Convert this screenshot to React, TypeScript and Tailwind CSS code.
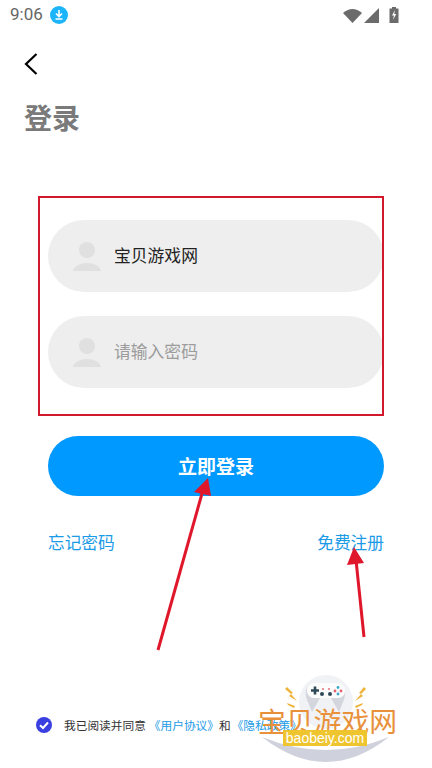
import React from "react";

const cjk = "font-['Noto_Sans_CJK_SC','Noto_Sans',sans-serif]";

function UserIcon() {
  return (
    <svg width="28" height="29" viewBox="0 0 28 29" className="shrink-0">
      <circle cx="14" cy="8" r="8" fill="#e0e0e0" />
      <path d="M0 29 C1 24 7 21 14 21 C21 21 27 24 28 29 Z" fill="#e0e0e0" />
    </svg>
  );
}

function Field({ text, dim }: { text: string; dim?: boolean }) {
  return (
    <div className="flex h-[72px] items-center rounded-[36px] bg-[#eeeeee] pl-[25px]">
      <UserIcon />
      <span className={`ml-[13px] text-[16.8px] ${dim ? "text-[#9c9c9c]" : "text-[#222222]"}`}>{text}</span>
    </div>
  );
}

function StatusBar() {
  return (
    <div className="flex h-[30px] items-center justify-between pl-[10px] pr-[33px]">
      <div className="flex items-center gap-[7px]">
        <span className="font-['Roboto',sans-serif] text-[17px] text-[#666666]">9:06</span>
        <svg width="18" height="18" viewBox="0 0 18 18">
          <circle cx="9" cy="9" r="9" fill="#1cb5fb" />
          <path d="M9 4 V10 M6 7.5 L9 10.5 L12 7.5 M5.5 13 H12.5" fill="none" stroke="#fff" strokeWidth="1.6" />
        </svg>
      </div>
      <div className="flex items-center gap-[2px]">
        <svg width="19" height="15" viewBox="0 0 19 15">
          <path d="M0 5 Q9.5 -3 19 5 L9.5 15 Z" fill="#6b6b6b" />
        </svg>
        <svg width="15" height="15" viewBox="0 0 15 15" className="mr-[8px]">
          <path d="M15 0 V15 H0 Z" fill="#6b6b6b" />
        </svg>
        <svg width="10" height="16" viewBox="0 0 10 16">
          <path d="M3 0 H7 V1.5 H9.5 V16 H0.5 V1.5 H3 Z" fill="#6b6b6b" />
          <path d="M6 3 L3 8.5 H5 L4 13 L7.2 7 H5.2 Z" fill="#fff" />
        </svg>
      </div>
    </div>
  );
}

function Arrows() {
  return (
    <svg width="432" height="768" viewBox="0 0 432 768" className="pointer-events-none absolute left-0 top-0">
      <path d="M158 650 L203 490" stroke="#e0162b" strokeWidth="3" fill="none" />
      <path d="M208 478 L194 492 L211 496 Z" fill="#e0162b" />
      <path d="M364 637 L356 560" stroke="#e0162b" strokeWidth="3" fill="none" />
      <path d="M354 547 L347 565 L364 563 Z" fill="#e0162b" />
    </svg>
  );
}

function Watermark() {
  return (
    <div className="absolute left-[258px] top-[674px] h-[94px] w-[140px]">
      <svg width="140" height="94" viewBox="0 0 140 94" className="absolute left-0 top-0">
        {/* badge backdrop and crescent */}
        <circle cx="68" cy="28" r="27" fill="#f1f2f5" />
        <path d="M4 63 Q68 113 131 63 Q68 89 4 63 Z" fill="#cfd2dc" />
        {/* controller */}
        <path d="M50 28 C45 18 49 9 57 9 H78 C86 9 90 18 85 28 L81 38 L73 24 H62 L54 38 Z" fill="#d3d6dd" />
        <rect x="49" y="9" width="38" height="15" rx="7" fill="#fcfcfc" />
        <path d="M53 16.5 H61 M57 12.5 V20.5" stroke="#2f4858" strokeWidth="2.6" />
        <circle cx="64" cy="20" r="2" fill="#2f4858" />
        <circle cx="72" cy="20" r="2" fill="#2f4858" />
        <circle cx="80" cy="13.5" r="1.4" fill="#3aa9c9" />
        <circle cx="83" cy="17" r="1.4" fill="#e4606d" />
        <circle cx="77" cy="17" r="1.4" fill="#e4606d" />
        <circle cx="80" cy="20" r="1.4" fill="#3aa9c9" />
        <circle cx="65" cy="15" r="0.9" fill="#e4606d" />
        <circle cx="71" cy="15" r="0.9" fill="#e4606d" />
        {/* sparks */}
        <path d="M29 13 L35 19 L33 20 L39 27 L31 22 L33 20 L27 15 Z" fill="#efb23a" />
        <path d="M29 29 L37 32 L36 34 L30 31 Z" fill="#efb23a" />
        <path d="M106 13 L101 19 L103 20 L97 27 L105 22 L103 20 L108 15 Z" fill="#efb23a" />
        <path d="M105 29 L97 32 L98 34 L104 31 Z" fill="#efb23a" />
      </svg>
      <div className={`absolute left-0 top-[29px] whitespace-nowrap text-[27.8px] leading-[34px] text-[#e8913a] ${cjk}`}>
        宝贝游戏网
      </div>
      <div className="absolute left-[25px] top-[56px] flex h-[16px] w-[84px] items-center justify-center bg-[#efc52f] font-['Liberation_Sans',sans-serif] text-[14px] text-white">
        baobeiy.com
      </div>
    </div>
  );
}

export default function App() {
  return (
    <div className={`relative h-[768px] w-[432px] overflow-hidden bg-white ${cjk}`}>
      <StatusBar />
      <div className="pl-[24px] pt-[23px]">
        <svg width="14" height="22" viewBox="0 0 14 22" className="block">
          <path d="M12.5 1 L2 11 L12.5 21" fill="none" stroke="#000" strokeWidth="2.2" />
        </svg>
      </div>
      <h1 className="ml-[24px] mt-[23px] text-[28px] font-bold leading-[38px] text-[#7a7a7a]">登录</h1>

      {/* red box is an annotation drawn over the form */}
      <div className="absolute left-[38px] top-[196px] h-[220px] w-[346px] border-2 border-[#d2182b]" />

      <div className="mt-[84px] flex flex-col gap-[24px] pl-[48px] pr-[48px]">
        <Field text="宝贝游戏网" />
        <Field text="请输入密码" dim />
      </div>

      <div className="mx-[48px] mt-[48px] flex h-[60px] items-center justify-center rounded-[30px] bg-[#0099ff] text-[19px] font-bold text-white">
        立即登录
      </div>

      <div className="mx-[48px] mt-[35px] flex justify-between text-[16.7px] leading-[22px] text-[#1b9ae6]">
        <span>忘记密码</span>
        <span>免费注册</span>
      </div>

      <div className="absolute left-[36px] top-[716px] flex items-center text-[11.7px] text-[#333333]">
        <svg width="16" height="16" viewBox="0 0 16 16" className="mr-[12px]">
          <circle cx="8" cy="8" r="8" fill="#3a3fe0" />
          <path d="M4 8.2 L7 11 L12 5.5" fill="none" stroke="#fff" strokeWidth="2" />
        </svg>
        <span>我已阅读并同意</span>
        <span className="ml-[3px] text-[#1b9ae6]">《用户协议》</span>
        <span>和</span>
        <span className="ml-[1px] text-[#1b9ae6]">《隐私政策》</span>
      </div>

      <Arrows />
      <Watermark />
    </div>
  );
}
